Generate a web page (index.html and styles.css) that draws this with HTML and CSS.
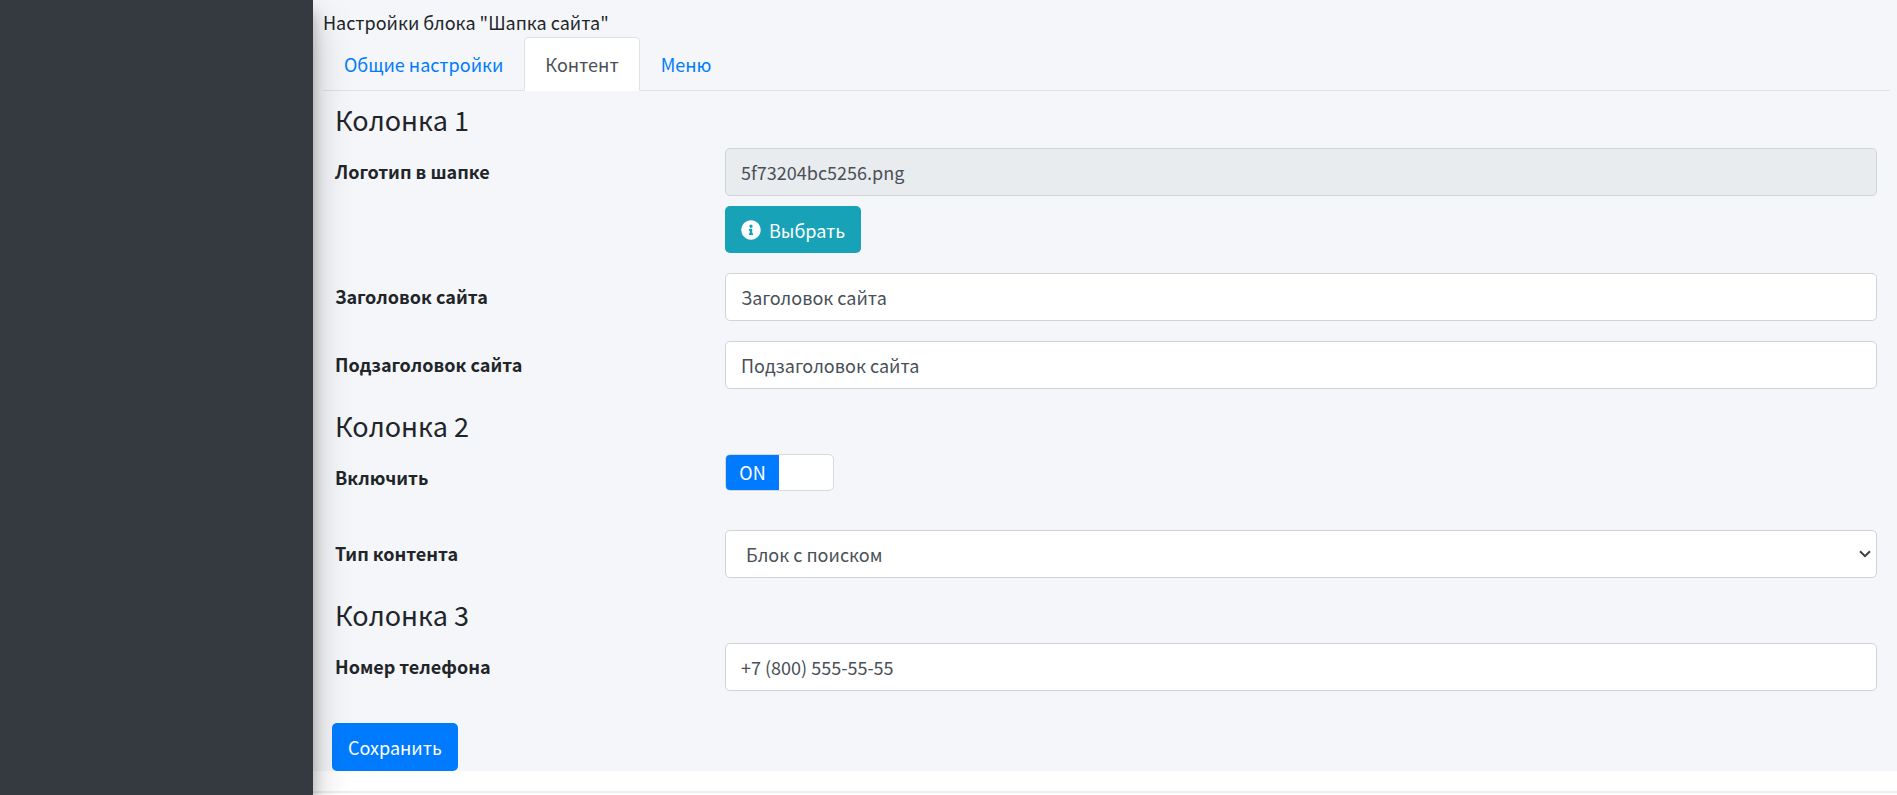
FILE: index.html
```html
<!DOCTYPE html>
<html lang="ru">
<head>
<meta charset="utf-8">
<title>Настройки блока</title>
<link rel="stylesheet" href="styles.css">
</head>
<body>
<div class="layout">
  <aside class="sidebar"></aside>
  <div class="page">
    <main class="content">
      <div class="title">Настройки блока "Шапка сайта"</div>
      <nav class="tabs">
        <a class="tab" href="#general">Общие настройки</a>
        <a class="tab active" href="#content">Контент</a>
        <a class="tab" href="#menu">Меню</a>
      </nav>
      <form class="form">
        <h4 class="heading">Колонка 1</h4>
        <div class="row">
          <label class="label" for="logo">Логотип в шапке</label>
          <div class="field">
            <input class="control" id="logo" type="text" value="5f73204bc5256.png" readonly>
            <button class="btn info" type="button">
              <svg class="icon" viewBox="0 0 512 512" aria-hidden="true"><path fill="currentColor" d="M256 8C119 8 8 119 8 256s111 248 248 248 248-111 248-248S393 8 256 8zm0 110a42 42 0 1 1 0 84 42 42 0 0 1 0-84zm56 254c0 7-5 12-12 12h-88c-7 0-12-5-12-12v-24c0-7 5-12 12-12h12v-64h-12c-7 0-12-5-12-12v-24c0-7 5-12 12-12h64c7 0 12 5 12 12v100h12c7 0 12 5 12 12z"/></svg>
              Выбрать
            </button>
          </div>
        </div>
        <div class="row">
          <label class="label" for="site-title">Заголовок сайта</label>
          <input class="control" id="site-title" type="text" value="Заголовок сайта">
        </div>
        <div class="row">
          <label class="label" for="site-subtitle">Подзаголовок сайта</label>
          <input class="control" id="site-subtitle" type="text" value="Подзаголовок сайта">
        </div>
        <h4 class="heading">Колонка 2</h4>
        <div class="row switch-row">
          <label class="label" for="enabled">Включить</label>
          <label class="switch">
            <input class="switch-input" id="enabled" type="checkbox" checked>
            <span class="switch-on">ON</span>
          </label>
        </div>
        <div class="row">
          <label class="label" for="type">Тип контента</label>
          <div class="select-wrap">
            <select class="control select" id="type"><option>Блок с поиском</option></select>
            <svg class="chevron" viewBox="0 0 12 8" aria-hidden="true"><path d="M1 1.2l5 5 5-5" fill="none" stroke="#3c4043" stroke-width="2"/></svg>
          </div>
        </div>
        <h4 class="heading">Колонка 3</h4>
        <div class="row">
          <label class="label" for="phone">Номер телефона</label>
          <input class="control" id="phone" type="text" value="+7 (800) 555-55-55">
        </div>
        <button class="btn save" type="submit">Сохранить</button>
      </form>
    </main>
    <footer class="footer"></footer>
  </div>
</div>
</body>
</html>
```
FILE: styles.css
```css
* { box-sizing: border-box; }
body {
  margin: 0;
  background: #fff;
  color: #212529;
  font: 18px/28px "Noto Sans CJK SC", "Noto Sans", sans-serif;
}
.layout { display: flex; min-height: 100vh; overflow: hidden; }
.sidebar {
  position: relative;
  z-index: 1;
  flex: 0 0 313px;
  background: #343a40;
  box-shadow: 0 18px 35px rgba(0, 0, 0, .25), 0 12px 12px rgba(0, 0, 0, .22);
}
.page { flex: 1; min-width: 0; display: flex; flex-direction: column; }
.content { background: #f4f6f9; padding: 8px 7px 0 10px; }
.title { padding-bottom: 1px; }
.tabs { display: flex; border-bottom: 1px solid #dee2e6; }
.tab {
  padding: 12px 20px;
  margin-bottom: -1px;
  border: 1px solid transparent;
  border-radius: 5px 5px 0 0;
  color: #007bff;
  text-decoration: none;
}
.tab.active { background: #fff; color: #495057; border-color: #dee2e6 #dee2e6 #fff; }
.form { padding: 12px 13px 0 12px; }
.heading { margin: 0 0 11px; font-size: 27px; line-height: 34px; font-weight: 400; }
.row { display: grid; grid-template-columns: 1fr 3fr; column-gap: 6px; margin-bottom: 20px; }
.row > * { min-width: 0; }
.label { padding: 9px 0; font-weight: 700; justify-self: start; }
.field { display: flex; flex-direction: column; align-items: flex-start; gap: 10px; }
.control {
  width: 100%;
  height: 48px;
  padding: 0 15px;
  border: 1px solid #ced4da;
  border-radius: 5px;
  background: #fff;
  color: #495057;
  font: inherit;
}
.control:read-only:not(select) { background: #e9ecef; }
.btn {
  display: inline-flex;
  align-items: center;
  border: 0;
  border-radius: 5px;
  padding: 0 16px;
  color: #fff;
  font: inherit;
}
.info { height: 47px; gap: 8px; background: #17a2b8; }
.save { height: 48px; margin: 12px 0 0 -3px; background: #007bff; vertical-align: top; }
.icon { width: 20px; height: 20px; }
.switch-row { min-height: 56px; }
.switch {
  display: flex;
  width: 109px;
  height: 37px;
  border: 1px solid #d6dade;
  border-radius: 5px;
  background: #fff;
  overflow: hidden;
}
.switch-input { position: absolute; opacity: 0; }
.switch-on { width: 53px; background: #007bff; color: #fff; text-align: center; line-height: 35px; }
.select-wrap { position: relative; }
.select { appearance: none; padding: 0 20px; }
.chevron { position: absolute; right: 6px; top: 20px; width: 12px; height: 8px; }
.footer { margin-top: 20px; border-top: 2px solid #eee; }
```
